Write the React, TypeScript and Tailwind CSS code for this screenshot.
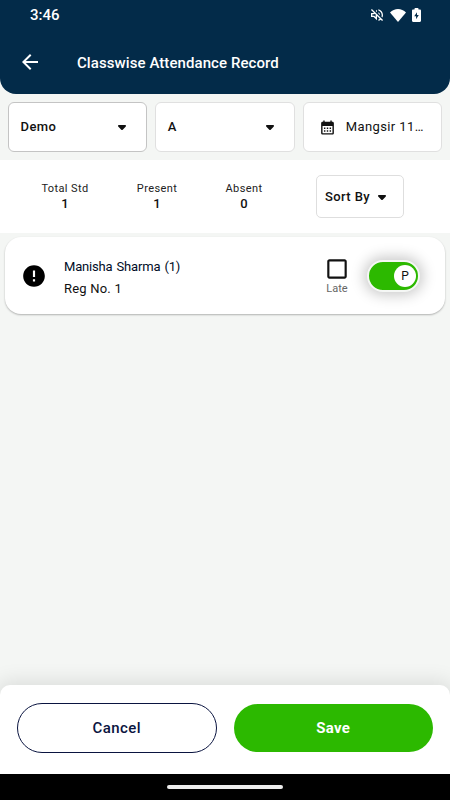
import { useState } from 'react'
import {
  MdArrowBack,
  MdCalendarMonth,
  MdCheckBoxOutlineBlank,
  MdError,
  MdOutlineCheckBox,
  MdOutlineVolumeOff,
} from 'react-icons/md'
import { clsx } from 'clsx'

// ─── Types ────────────────────────────────────────────────────────────────────

interface Student {
  name: string
  roll: number
  regNo: number
}

const students: Student[] = [{ name: 'Manisha Sharma', roll: 1, regNo: 1 }]

// ─── Sub-components ──────────────────────────────────────────────────────────

function Caret() {
  return (
    <svg viewBox="0 0 8 6" className="w-2 h-1.5 mt-0.5 shrink-0" fill="#111">
      <path d="M.8 0h6.400c.5 0 .8.3.8.8 0 .4-.1.6-.4.9L4.700 4.700c-.4.4-1 .4-1.400 0L.4 1.700C.1 1.400 0 1.200 0 .8 0 .3.3 0 .8 0z" />
    </svg>
  )
}

function StatusBar() {
  return (
    <div className="flex h-[30px] items-center justify-between pl-[30px] pr-[29px] text-white">
      <span className="text-[15px] leading-5 font-medium">3:46</span>
      <div className="flex items-center">
        <MdOutlineVolumeOff className="w-4 h-4 mr-[5px]" />
        <svg viewBox="0 0 16 13" className="w-4 h-[13px] mr-[6px]" fill="currentColor">
          <path d="M8 13 0 3.500C2.200 1.300 5 0 8 0s5.800 1.300 8 3.500z" />
        </svg>
        <svg viewBox="0 0 9 14" className="w-[9px] h-[14px]">
          <path
            fill="currentColor"
            d="M2.500 1.500V.8c0-.5.3-.8.8-.8h2.400c.5 0 .8.3.8.8v.7h1.300c.7 0 1.200.5 1.200 1.200v10.100c0 .7-.5 1.200-1.200 1.200H1.200C.5 14 0 13.500 0 12.800V2.700c0-.7.5-1.200 1.200-1.200z"
          />
          <path fill="#032b49" d="M5 4.200 2.200 8.300h1.900v2.900l2.700-4.100H5z" />
        </svg>
      </div>
    </div>
  )
}

function FilterSelect({ value, active }: { value: string; active?: boolean }) {
  return (
    <button
      className={clsx(
        'flex h-[50px] min-w-0 items-center justify-between rounded-md border bg-white pl-[11.5px] pr-5',
        active ? 'border-[#c4c4c4]' : 'border-[#e0e0e0]',
      )}
    >
      <span className="text-[13px] font-medium tracking-[0.4px]">{value}</span>
      <Caret />
    </button>
  )
}

function Stat({ label, value, className }: { label: string; value: number; className: string }) {
  return (
    <div className={clsx('flex flex-col items-center', className)}>
      <span className="text-[11px] leading-[15px] tracking-[0.4px] whitespace-nowrap text-[#222]">{label}</span>
      <span className="text-[13px] leading-4 font-medium">{value}</span>
    </div>
  )
}

function StudentCard({ student }: { student: Student }) {
  const [late, setLate] = useState(false)
  const [present, setPresent] = useState(true)
  const LateIcon = late ? MdOutlineCheckBox : MdCheckBoxOutlineBlank

  return (
    <div className="flex h-[77px] items-center rounded-2xl bg-white pl-4 pr-[25px] shadow-[0_1px_2px_rgba(0,0,0,0.28)]">
      <MdError className="w-[26px] h-[26px] text-black" />
      <div className="ml-[17px] flex-1 pt-[3px]">
        <p className="text-[13px] leading-[22px] tracking-[-0.17px] [word-spacing:1px] text-[#000c26]">
          {student.name} ({student.roll})
        </p>
        <p className="text-[13px] leading-[21px] tracking-[0.2px] text-[#111]">Reg No. {student.regNo}</p>
      </div>
      <button onClick={() => setLate(!late)} className="flex w-7 flex-col items-center pt-px">
        <LateIcon className="w-[26px] h-[26px] text-[#111]" />
        <span className="text-[11px] leading-[14px] text-[#666]">Late</span>
      </button>
      <button
        onClick={() => setPresent(!present)}
        className={clsx(
          'ml-4 flex h-8 w-[53px] items-center rounded-full border-2 border-[#f5f7f5] px-[2px] shadow-[0_0_14px_3px_rgba(0,0,0,0.22)]',
          present ? 'justify-end bg-[#2cb900]' : 'justify-start bg-[#d32f2f]',
        )}
      >
        <span className="flex h-[22px] w-[22px] items-center justify-center rounded-full bg-white pt-px text-[12px] leading-none">
          {present ? 'P' : 'A'}
        </span>
      </button>
    </div>
  )
}

// ─── Page ────────────────────────────────────────────────────────────────────

export default function App() {
  return (
    <div className="flex h-screen flex-col overflow-hidden bg-[#f4f6f4] font-[Roboto,sans-serif] text-[#111]">
      {/* Header */}
      <header className="h-[94px] shrink-0 rounded-b-2xl bg-[#032b49] text-white">
        <StatusBar />
        <div className="flex h-[64px] items-center pl-[18px]">
          <MdArrowBack className="w-6 h-6" />
          <h1 className="ml-[35px] pt-0.5 text-[15px] font-medium tracking-[0.08px]">Classwise Attendance Record</h1>
        </div>
      </header>

      {/* Filters */}
      <div className="grid shrink-0 grid-cols-3 gap-2 p-2">
        <FilterSelect value="Demo" active />
        <FilterSelect value="A" />
        <button className="flex h-[50px] min-w-0 items-center rounded-md border border-[#e0e0e0] bg-white pl-[15px]">
          <MdCalendarMonth className="w-[17px] h-[17px] shrink-0" />
          <span className="ml-[10px] text-[13px] tracking-[0.4px] whitespace-nowrap">Mangsir 11…</span>
        </button>
      </div>

      {/* Totals */}
      <div className="flex h-[73px] shrink-0 items-center bg-white pl-[30px]">
        <Stat label="Total Std" value={1} className="w-[70px]" />
        <Stat label="Present" value={1} className="ml-[22px] w-[70px]" />
        <Stat label="Absent" value={0} className="ml-[17px] w-[70px]" />
        <button className="ml-[37px] flex h-[43px] w-[88px] items-center rounded-[5px] border border-[#dedede] pl-2">
          <span className="text-[13px] font-medium tracking-[0.4px]">Sort By</span>
          <span className="ml-2">
            <Caret />
          </span>
        </button>
      </div>

      {/* Students */}
      <main className="flex-1 px-[5px] pt-1">
        {students.map((student) => (
          <StudentCard key={student.regNo} student={student} />
        ))}
      </main>

      {/* Actions */}
      <footer className="grid h-[89px] shrink-0 grid-cols-2 items-center gap-[17px] rounded-t-[10px] bg-white px-[17px] pb-1 shadow-[0_0_20px_4px_rgba(0,0,0,0.1)]">
        <button className="h-[50px] rounded-full border border-[#0a1440] pt-px text-[15px] font-medium tracking-[0.4px] text-[#0a1440]">
          Cancel
        </button>
        <button className="h-12 rounded-full bg-[#2cb900] pt-px text-[15px] font-bold tracking-[0.3px] text-white">
          Save
        </button>
      </footer>

      {/* System navigation */}
      <div className="flex h-[26px] shrink-0 justify-center bg-black pt-[11px]">
        <div className="h-[4px] w-[116px] rounded-full bg-[#ececec]" />
      </div>
    </div>
  )
}
